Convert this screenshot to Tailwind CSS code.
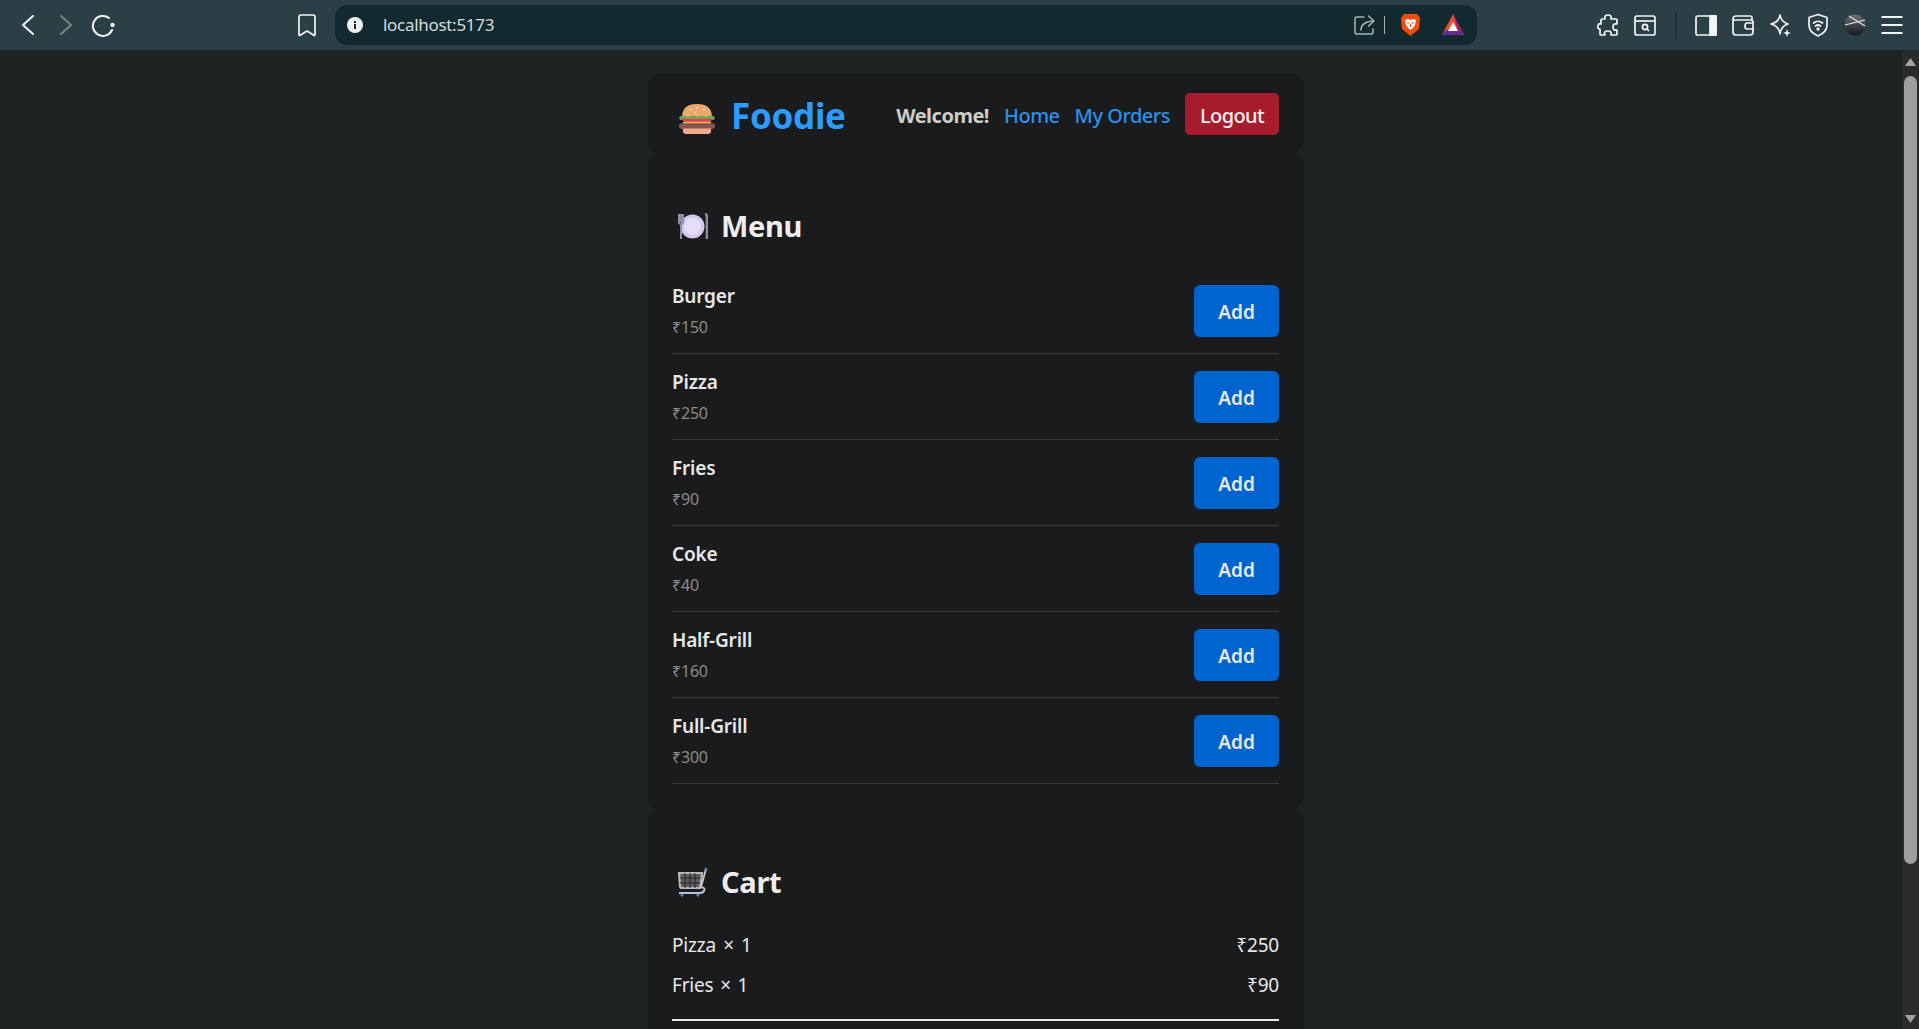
<!DOCTYPE html>
<html lang="en">
<head>
<meta charset="utf-8">
<title>Foodie</title>
<script src="https://cdn.jsdelivr.net/npm/@tailwindcss/browser@4"></script>
</head>
<body class="h-[1029px] overflow-hidden bg-[#1d2223] font-['Noto_Sans','Open_Sans',sans-serif] text-[#e8e8e8]">
<header class="flex h-[51px] items-center border-b border-[#1b2628] bg-[#2b4046] pr-[15px] pl-[16px]">
  <svg class="h-6 w-6" viewBox="0 0 24 24" fill="none" stroke="#f2f5f5" stroke-width="2" stroke-linecap="round" stroke-linejoin="round"><path d="M17 3 L7 12 L17 21"/></svg>
  <svg class="ml-[14px] h-6 w-6" viewBox="0 0 24 24" fill="none" stroke="#76868a" stroke-width="2" stroke-linecap="round" stroke-linejoin="round"><path d="M7 3 L17 12 L7 21"/></svg>
  <svg class="ml-[13px] h-6 w-6" viewBox="0 0 24 24" fill="none" stroke="#f2f5f5" stroke-width="2" stroke-linecap="round"><path d="M21 17 A10 10 0 1 1 18 5"/><circle cx="21.5" cy="12" r="2.2" fill="#f2f5f5" stroke="none"/></svg>
  <svg class="ml-[180px] h-6 w-6" viewBox="0 0 24 24" fill="none" stroke="#f2f5f5" stroke-width="1.7" stroke-linejoin="round"><path d="M6 2 H18 A2 2 0 0 1 20 4 V21.5 Q20 23 18.5 22 L12 18 L5.5 22 Q4 23 4 21.5 V4 A2 2 0 0 1 6 2 Z"/></svg>
  <div class="ml-[16px] flex h-10 w-[1142px] items-center rounded-xl bg-[#122a2f] pr-[12px] pl-[12px]">
    <svg class="h-4 w-4" viewBox="0 0 16 16"><circle cx="8" cy="8" r="8" fill="#f0f3f3"/><rect x="7" y="7" width="2" height="5" fill="#122a2f"/><rect x="7" y="4" width="2" height="2" fill="#122a2f"/></svg>
    <span class="ml-[20px] text-[17px] tracking-[-0.3px] text-[#d5dcdd]">localhost:5173</span>
    <svg class="ml-auto h-6 w-6" viewBox="0 0 24 24" fill="none" stroke="#a9b6b8" stroke-width="1.5" stroke-linecap="round" stroke-linejoin="round"><path d="M11 4 H4 Q2 4 2 6 V19 Q2 21 4 21 H18 Q20 21 20 19 V16"/><path d="M8 17 Q8 9 20 8"/><path d="M15.5 3 L21 8 L15.5 13"/></svg>
    <div class="ml-[7px] h-[18px] w-px bg-[#a9b6b8]"></div>
    <svg class="ml-[15px] h-6 w-[21px]" viewBox="0 0 21 24"><path d="M4 1 H17 L20 5 L19 16 L10.5 23 L2 16 L1 5 Z" fill="#f04e10"/><path d="M5 7 L8 6 L10.5 7 L13 6 L16 7 L15 12 L13 15 L10.5 17 L8 15 L6 12 Z" fill="#fff"/><path d="M7 10 H9.5 M11.5 10 H14 M10.5 11 V14" stroke="#f04e10" stroke-width="1.2" fill="none"/></svg>
    <svg class="ml-[20px] h-6 w-6" viewBox="0 0 24 24"><polygon points="12,1 23,22 1,22" fill="#ee4b2b"/><polygon points="12,1 23,22 18,22" fill="#9e1f63"/><polygon points="1,22 23,22 19,17 5,17" fill="#662d91"/><polygon points="12,9 17,18 7,18" fill="#fff"/></svg>
  </div>
  <div class="ml-auto flex items-center gap-[13px]">
    <svg class="h-6 w-6" viewBox="0 0 24 24" fill="none" stroke="#f2f5f5" stroke-width="1.7" stroke-linejoin="round"><path d="M9 6 Q8 2 12 2 Q16 2 15 6 H20 A1 1 0 0 1 21 7 V11 Q17 10 17 14 Q17 18 21 17 V21 A1 1 0 0 1 20 22 H15 Q16 18 12 18 Q7 18 9 22 H5 A1 1 0 0 1 4 21 V16 Q1 16 2 12.5 Q3 10 5 11 V7 A1 1 0 0 1 6 6 Z"/></svg>
    <svg class="mr-[5px] h-6 w-6" viewBox="0 0 24 24" fill="none" stroke="#f2f5f5" stroke-width="1.7"><rect x="2" y="3" width="20" height="19" rx="2"/><path d="M2 8 H22"/><circle cx="12" cy="14" r="2.6"/><path d="M14 16 L16 18"/></svg>
    <div class="mr-[4px] h-7 w-[2px] bg-[#1b3238]"></div>
    <svg class="h-6 w-6" viewBox="0 0 24 24" fill="none" stroke="#f2f5f5" stroke-width="1.7"><rect x="2" y="3" width="20" height="19" rx="1.5"/><rect x="16" y="3" width="6" height="19" fill="#f2f5f5"/></svg>
    <svg class="h-6 w-6" viewBox="0 0 24 24" fill="none" stroke="#f2f5f5" stroke-width="1.7" stroke-linejoin="round"><path d="M21 7 V5 Q21 3 19 3 H5 Q2 3 2 6 V19 Q2 22 5 22 H19 Q22 22 22 19 V16"/><path d="M2 7 H19 Q22 7 22 9 V10"/><path d="M22 10 H16 Q14 10 14 13 Q14 16 16 16 H22 Z"/></svg>
    <svg class="mr-[1px] h-6 w-6" viewBox="0 0 24 24" fill="none" stroke="#f2f5f5" stroke-width="1.7" stroke-linejoin="round"><path d="M12 2 Q13 9 20 11 Q13 13 12 21 Q11 13 3 11 Q11 9 12 2 Z"/><path d="M19 16 L20 19 L23 20 L20 21 L19 24 L18 21 L15 20 L18 19 Z" fill="#f2f5f5" stroke="none"/></svg>
    <svg class="h-6 w-6" viewBox="0 0 24 24" fill="none" stroke="#f2f5f5" stroke-width="1.7" stroke-linecap="round" stroke-linejoin="round"><path d="M12 1.5 L21 4.5 V12 Q21 19 12 23 Q3 19 3 12 V4.5 Z"/><path d="M7.5 10 Q12 6.5 16.5 10"/><path d="M9.5 13 Q12 11 14.5 13"/><circle cx="12" cy="16" r="0.8" fill="#f2f5f5"/></svg>
    <svg class="h-6 w-6" viewBox="0 0 24 24"><defs><linearGradient id="avatar" x1="0" y1="0" x2="0" y2="1"><stop offset="0" stop-color="#6b7176"/><stop offset="1" stop-color="#15161a"/></linearGradient></defs><circle cx="12" cy="12" r="10.5" fill="url(#avatar)"/><path d="M2 12 L22 7 M6 3 L22 13" stroke="#e4e4e4" stroke-width="1.2" fill="none"/></svg>
    <svg class="h-6 w-6" viewBox="0 0 24 24" stroke="#f2f5f5" stroke-width="2" fill="none"><path d="M1.5 4 H22.5 M1.5 12 H22.5 M1.5 20 H22.5"/></svg>
  </div>
</header>

<div class="flex h-[978px]">
  <main class="min-w-0 flex-1 overflow-hidden pl-[648px]">
    <div class="mt-[23px] flex h-[79px] w-[656px] items-center justify-between rounded-xl bg-[#191b1d] pr-[25px] pl-[30px]">
      <div class="flex items-center gap-[15px]">
        <svg class="mt-[11px] h-[32px] w-[38px]" viewBox="0 0 38 34" preserveAspectRatio="none">
          <path d="M4 15 Q4 1 19 1 Q34 1 34 15 Z" fill="#eba96b"/>
          <path d="M12 7 h2 M18 5 h2 M25 7 h2 M16 10 h2" stroke="#f7e4cf" stroke-width="1.3"/>
          <path d="M1 15 Q6 12 10 15 Q15 12 19 15 Q24 12 28 15 Q33 12 37 15 L36 18 H2 Z" fill="#6aa84f"/>
          <path d="M3 17 H35 L31 21 H7 Z" fill="#e23f66"/>
          <rect x="5" y="20" width="28" height="3" fill="#f2c230"/>
          <rect x="1" y="21.5" width="36" height="6" rx="3" fill="#845552"/>
          <path d="M5 27 H33 V30 Q33 33 29 33 H9 Q5 33 5 30 Z" fill="#f3a98a"/>
        </svg>
        <span class="pt-1 text-[35px] leading-none font-bold tracking-[-0.3px] text-[#2a9dff]">Foodie</span>
      </div>
      <nav class="flex items-center gap-[15px] text-[20px]">
        <span class="pt-1 font-bold tracking-[-0.5px] text-[#d0cdc6]">Welcome!</span>
        <a class="pt-1 font-medium tracking-[-0.5px] text-[#2a90ee]">Home</a>
        <a class="pt-1 font-medium tracking-[-0.5px] text-[#2a90ee]">My Orders</a>
        <button class="h-[42px] w-[94px] rounded-[5px] bg-[#a51d2d] pt-1 font-medium tracking-[-0.6px] text-[#f2eeee]">Logout</button>
      </nav>
    </div>

    <section class="w-[656px] rounded-xl bg-[#191b1d] pt-[54px] pr-[25px] pb-[25px] pl-[24px]">
      <h2 class="flex h-10 items-center gap-[13px] pb-[2px] pl-[5px] text-[29px] font-bold tracking-[-0.3px] text-[#eeeeee]">
        <svg class="h-[27px] w-[31px]" viewBox="0 0 31 27">
          <circle cx="15.5" cy="13.5" r="12" fill="#d3c9ee"/><circle cx="15.5" cy="13.5" r="8.5" fill="#e6def8"/>
          <path d="M2 1 V9 Q2 11 4 11 V26 M4 1 V9 M6 1 V9 Q6 11 4 11" stroke="#918c9e" stroke-width="2" fill="none"/>
          <path d="M28 1 Q30 1 30 6 V26" stroke="#918c9e" stroke-width="2.6" fill="none"/>
        </svg>
        Menu
      </h2>
      <ul class="mt-[21px]">
        <li class="flex items-center justify-between border-b border-[#38393b] pt-[17px] pb-4">
          <div><p class="text-[19px] leading-[22px] font-semibold tracking-[-0.2px]">Burger</p><p class="mt-[10px] text-[16px] leading-5 tracking-[-0.2px] text-[#8b8b88]">₹150</p></div>
          <button class="h-[52px] w-[85px] rounded-md bg-[#0064d0] pt-[2px] text-[19px] font-semibold text-[#e8e8e8]">Add</button>
        </li>
        <li class="flex items-center justify-between border-b border-[#38393b] pt-[17px] pb-4">
          <div><p class="text-[19px] leading-[22px] font-semibold tracking-[-0.2px]">Pizza</p><p class="mt-[10px] text-[16px] leading-5 tracking-[-0.2px] text-[#8b8b88]">₹250</p></div>
          <button class="h-[52px] w-[85px] rounded-md bg-[#0064d0] pt-[2px] text-[19px] font-semibold text-[#e8e8e8]">Add</button>
        </li>
        <li class="flex items-center justify-between border-b border-[#38393b] pt-[17px] pb-4">
          <div><p class="text-[19px] leading-[22px] font-semibold tracking-[-0.2px]">Fries</p><p class="mt-[10px] text-[16px] leading-5 tracking-[-0.2px] text-[#8b8b88]">₹90</p></div>
          <button class="h-[52px] w-[85px] rounded-md bg-[#0064d0] pt-[2px] text-[19px] font-semibold text-[#e8e8e8]">Add</button>
        </li>
        <li class="flex items-center justify-between border-b border-[#38393b] pt-[17px] pb-4">
          <div><p class="text-[19px] leading-[22px] font-semibold tracking-[-0.2px]">Coke</p><p class="mt-[10px] text-[16px] leading-5 tracking-[-0.2px] text-[#8b8b88]">₹40</p></div>
          <button class="h-[52px] w-[85px] rounded-md bg-[#0064d0] pt-[2px] text-[19px] font-semibold text-[#e8e8e8]">Add</button>
        </li>
        <li class="flex items-center justify-between border-b border-[#38393b] pt-[17px] pb-4">
          <div><p class="text-[19px] leading-[22px] font-semibold tracking-[-0.2px]">Half-Grill</p><p class="mt-[10px] text-[16px] leading-5 tracking-[-0.2px] text-[#8b8b88]">₹160</p></div>
          <button class="h-[52px] w-[85px] rounded-md bg-[#0064d0] pt-[2px] text-[19px] font-semibold text-[#e8e8e8]">Add</button>
        </li>
        <li class="flex items-center justify-between border-b border-[#38393b] pt-[17px] pb-4">
          <div><p class="text-[19px] leading-[22px] font-semibold tracking-[-0.2px]">Full-Grill</p><p class="mt-[10px] text-[16px] leading-5 tracking-[-0.2px] text-[#8b8b88]">₹300</p></div>
          <button class="h-[52px] w-[85px] rounded-md bg-[#0064d0] pt-[2px] text-[19px] font-semibold text-[#e8e8e8]">Add</button>
        </li>
      </ul>
    </section>

    <section class="w-[656px] rounded-xl bg-[#191b1d] pt-[54px] pr-[25px] pb-[25px] pl-[24px]">
      <h2 class="flex h-10 items-center gap-[13px] pb-[2px] pl-[5px] text-[29px] font-bold tracking-[-0.3px] text-[#eeeeee]">
        <svg class="h-[30px] w-[31px]" viewBox="0 0 31 30" fill="none">
          <path d="M2 6 H25 L23 21 H5 Q3 21 3 19 Z" fill="#5d5d60" stroke="#b9b9bc" stroke-width="2.2"/>
          <path d="M3 11 H24 M3 16 H23 M8 6 V21 M13 6 V21 M18 6 V21" stroke="#25262a" stroke-width="1"/>
          <path d="M29 2 L24 20 Q29 21 27 24 Q26 26 23 26 H2" stroke="#c3c0cc" stroke-width="2"/>
          <circle cx="5" cy="28" r="1.6" fill="#3d82d6"/><circle cx="21" cy="28" r="1.6" fill="#3d82d6"/><circle cx="29" cy="2" r="1.6" fill="#3d82d6"/>
        </svg>
        Cart
      </h2>
      <div class="mt-[22px] flex h-10 items-center justify-between text-[19px] tracking-[-0.2px] [word-spacing:2.5px]"><span>Pizza × 1</span><span>₹250</span></div>
      <div class="flex h-10 items-center justify-between text-[19px] tracking-[-0.2px] [word-spacing:2px]"><span>Fries × 1</span><span>₹90</span></div>
      <div class="mt-[14px] h-[2px] bg-[#e8e8e8]"></div>
    </section>
  </main>

  <aside class="flex w-[17px] flex-col items-center bg-[#2b2b2b]">
    <svg class="mt-[7px] h-[8px] w-[11px]" viewBox="0 0 11 8"><polygon points="5.5,0 11,8 0,8" fill="#a3a3a3"/></svg>
    <div class="mt-[10px] h-[788px] w-[13px] rounded-full bg-[#9e9e9e]"></div>
    <svg class="mt-auto mb-[6px] h-[8px] w-[11px]" viewBox="0 0 11 8"><polygon points="0,0 11,0 5.5,8" fill="#a3a3a3"/></svg>
  </aside>
</div>
</body>
</html>
